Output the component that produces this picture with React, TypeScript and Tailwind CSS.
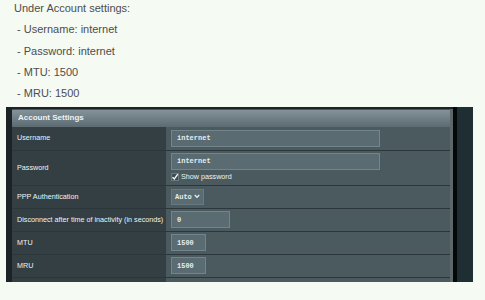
import React from "react";

const Input = ({ w, value }: { w: string; value: string }) => (
  <div
    className={`${w} h-[17px] bg-[#5a6c71] border border-[#72858a] flex items-center pl-[5px] text-[7px] font-bold text-[#e6ecee]`}
    style={{ fontFamily: '"Liberation Mono", monospace' }}
  >
    {value}
  </div>
);

const Row = ({
  label,
  h,
  children,
}: {
  label: string;
  h: string;
  children: React.ReactNode;
}) => (
  <div className={`flex ${h} border-b border-[#2b373b]`}>
    <div className="w-[154px] bg-[#343f43] flex items-center pl-[5px] text-[7.2px] text-[#eef3f5]">
      {label}
    </div>
    <div className="flex-1 bg-[#4a5a5e] flex flex-col justify-center pl-[5px]">
      {children}
    </div>
  </div>
);

export default function App() {
  const lines = [
    "Under Account settings:",
    "\u00a0- Username: internet",
    "\u00a0- Password: internet",
    "\u00a0- MTU: 1500",
    "\u00a0- MRU: 1500",
  ];
  return (
    <div className="w-[485px] h-[300px] bg-[#f5faf2] overflow-hidden">
      <div
        className="mt-[-2px] pl-[14px] text-[11px] leading-[21.3px] text-[#4d4d4d]"
        style={{ fontFamily: '"Liberation Sans", Arial, sans-serif' }}
      >
        {lines.map((l, i) => (
          <div key={i}>{l}</div>
        ))}
      </div>
      <div
        className="mt-[2.5px] ml-[6px] flex h-[175px] w-[467px]"
        style={{ fontFamily: '"Liberation Sans", Arial, sans-serif' }}
      >
        <div className="w-[6px] bg-[#1b2326]" />
        <div className="w-[441px] bg-[#1b2326] pt-[2px] flex">
          <div className="w-[438px] flex flex-col">
            <div className="h-[18px] bg-gradient-to-b from-[#84939a] to-[#5c6b71] border-t border-[#4a5357] flex items-center pl-[6px] text-[8px] font-bold text-[#eef2f4]">
              Account Settings
            </div>
            <Row label="Username" h="h-[24px]">
              <Input w="w-[209px]" value="internet" />
            </Row>
            <Row label="Password" h="h-[35px]">
              <Input w="w-[209px]" value="internet" />
              <div className="flex items-center mt-[2px] gap-[2px]">
                <svg width="8" height="8" viewBox="0 0 8 8">
                  <rect x="0.5" y="0.5" width="7" height="7" fill="#3f4d51" stroke="#6a7b80" />
                  <path d="M1.5 4.2 L3.3 6 L6.8 1.2" stroke="#f2f5f6" strokeWidth="1.4" fill="none" />
                </svg>
                <span className="text-[7.2px] text-[#eef3f5]">Show password</span>
              </div>
            </Row>
            <Row label="PPP Authentication" h="h-[23px]">
              <div className="w-[33px] h-[16px] bg-[#5a6c71] border border-[#677a7f] flex items-center pl-[3px] gap-[2px] text-[7px] font-bold text-[#e6ecee]">
                <span style={{ fontFamily: '"Liberation Mono", monospace' }}>Auto</span>
                <svg width="6" height="5" viewBox="0 0 6 5">
                  <path d="M0.8 1 L3 3.4 L5.2 1" stroke="#eef2f4" strokeWidth="1.3" fill="none" />
                </svg>
              </div>
            </Row>
            <Row label="Disconnect after time of inactivity (in seconds)" h="h-[23px]">
              <Input w="w-[59px]" value="0" />
            </Row>
            <Row label="MTU" h="h-[23px]">
              <Input w="w-[35px]" value="1500" />
            </Row>
            <Row label="MRU" h="h-[23px]">
              <Input w="w-[35px]" value="1500" />
            </Row>
            <div className="flex flex-1">
              <div className="w-[154px] bg-[#343f43]" />
              <div className="flex-1 bg-[#4a5a5e]" />
            </div>
          </div>
          <div className="w-[3px] bg-[#5d6669]" />
        </div>
        <div className="w-[4px] bg-[#050808]" />
        <div className="w-[16px] bg-[#1e2e33]" />
      </div>
    </div>
  );
}
